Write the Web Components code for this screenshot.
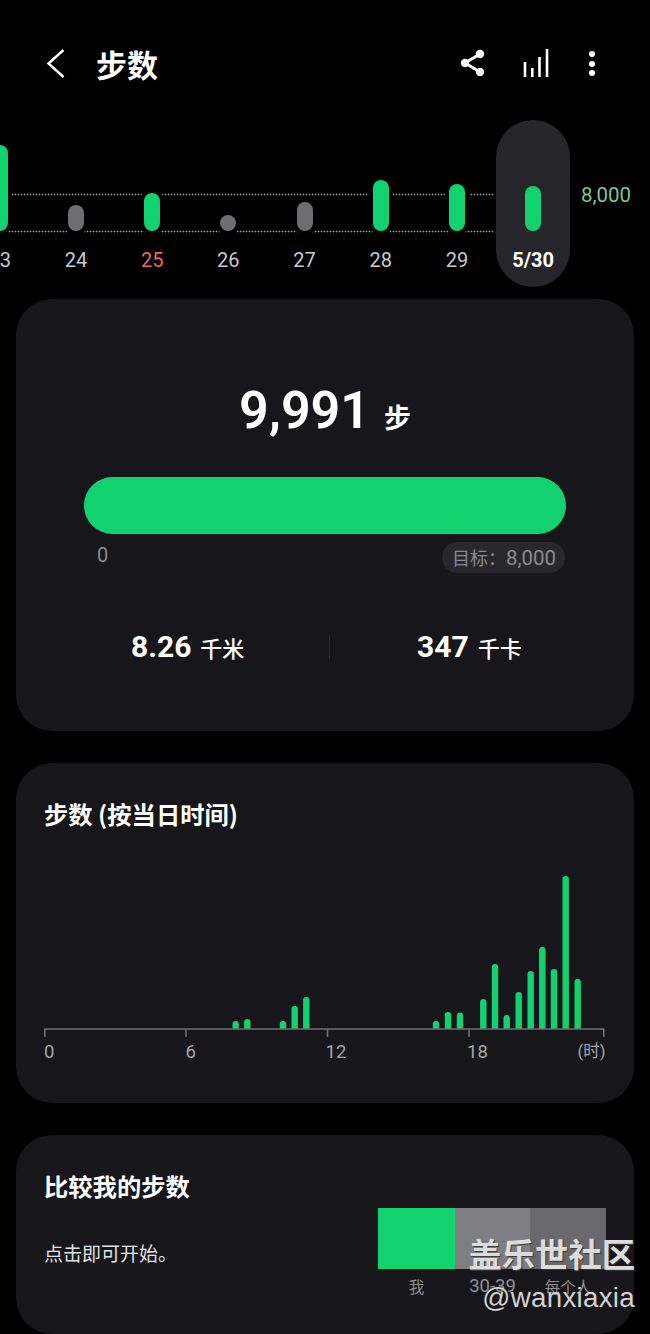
<!DOCTYPE html>
<html lang="zh"><head><meta charset="utf-8"><title>步数</title>
<style>
html,body{margin:0;background:#000;height:1334px;overflow:hidden}
body{font-family:Roboto,"Noto Sans CJK SC",sans-serif;color:#fff;position:relative}
</style></head><body>
<top-bar title-text="步数"></top-bar>
<day-strip></day-strip>
<div style="display:flex;flex-direction:column;gap:32px;padding:12px 16px 0">
<summary-card></summary-card>
<hourly-card></hourly-card>
<compare-card></compare-card>
</div>
<water-mark></water-mark>
<script>
const def=(name,html,setup)=>customElements.define(name,class extends HTMLElement{
  connectedCallback(){if(this.shadowRoot)return;const r=this.attachShadow({mode:'open'});r.innerHTML=html;if(setup)setup.call(this,r)}
});
def('top-bar',`<style>
:host{display:flex;height:120px;box-sizing:border-box;padding:49px 0 0 44px;align-items:flex-start}
h1{margin:-3px 0 0 28px;font:700 31px/36px "Noto Sans CJK SC",sans-serif;color:#fff;flex:1}
svg{display:block;fill:none;stroke:#fff}
</style>
<svg width="24" height="30" viewBox="44 49 24 30" stroke-width="2.4"><path d="M63.500 50 L48.500 63.500 L63.500 77"/></svg>
<h1 id="t"></h1>
<svg width="30" height="30" viewBox="458 49 30 30" stroke-width="3"><path d="M480 54 L465 63 L480 72"/><g fill="#fff" stroke="none"><circle cx="480" cy="54" r="4.200"/><circle cx="465" cy="63" r="4.200"/><circle cx="480" cy="72" r="4.200"/></g></svg>
<svg style="margin-left:32px" width="32" height="30" viewBox="520 49 32 30" stroke-width="2.600"><path d="M525 62V77M532.300 68V77M539.500 57V77M547 49V77"/></svg>
<svg style="margin:0 48px 0 30px" width="20" height="30" viewBox="582 49 20 30"><g fill="#fff" stroke="none"><circle cx="592" cy="54" r="3"/><circle cx="592" cy="64" r="3"/><circle cx="592" cy="73" r="3"/></g></svg>`,
function(r){r.getElementById('t').textContent=this.getAttribute('title-text')});

def('day-column',`<style>
:host{display:block;width:76.2px;flex:none;height:167px}
.c{height:100%;display:flex;flex-direction:column;align-items:center;position:relative}
.plot{height:111px;display:flex;align-items:flex-end;flex:none}
.b{width:16px;border-radius:8px;background:#12d16f;box-shadow:0 0 0 4px #000;position:relative}
.l{font:400 20px/24px Roboto,sans-serif;color:#c9c9cb;margin-top:16.500px}
:host([gray]) .b{background:#6e6e72}
:host([red]) .l{color:#e8686a}
:host([sel]) .c{width:74px;margin:0 auto;background:#26262a;border-radius:37px}
:host([sel]) .b{box-shadow:none}
:host([sel]) .l{color:#fff;font-weight:700}
</style><div class="c"><div class="plot"><div class="b" id="b"></div></div><div class="l" id="l"></div></div>`,
function(r){r.getElementById('b').style.height=this.getAttribute('h')+'px';r.getElementById('l').textContent=this.getAttribute('label')});

def('day-strip',`<style>
:host{display:block;height:167px;position:relative;overflow:hidden}
.row{display:flex;margin-left:-38.300px;position:relative}
.dot{position:absolute;left:8px;width:486px;height:3px;background:radial-gradient(circle at 1.500px 1.500px,#a2a2a4 .75px,transparent 1.100px) 0 0/3px 3px repeat-x}
.goal{position:absolute;left:581px;top:63px;font:400 20.500px/24px Roboto,sans-serif;color:#7fc497}
</style>
<div class="dot" style="top:73px"></div><div class="dot" style="top:110px"></div>
<div class="row">
<day-column h="86" label="23"></day-column>
<day-column h="26" gray label="24"></day-column>
<day-column h="38" red label="25"></day-column>
<day-column h="16" gray label="26"></day-column>
<day-column h="29" gray label="27"></day-column>
<day-column h="51" label="28"></day-column>
<day-column h="47" label="29"></day-column>
<day-column h="45" sel label="5/30"></day-column>
</div><div class="goal">8,000</div>`);

def('summary-card',`<style>
:host{display:block;height:432px;background:#17171b;border-radius:36px;box-sizing:border-box;padding:80px 68px 0;font-family:Roboto,"Noto Sans CJK SC",sans-serif}
.big{display:flex;justify-content:center;align-items:baseline;height:64px}
.n{font:600 52px/64px Roboto,sans-serif;color:#fff}
.u{font:700 27px/30px "Noto Sans CJK SC",sans-serif;margin-left:14px;color:#fff}
.bar{height:57px;border-radius:28.500px;background:#12d16f;margin-top:34px}
.sc{display:flex;justify-content:space-between;align-items:flex-start;margin-top:8px}
.z{font:400 20px/26px Roboto,sans-serif;color:#8a8a8e;margin-left:13px}
.chip{height:31px;border-radius:15.500px;background:#28282c;color:#8a8a8e;font:400 18px/31px "Noto Sans CJK SC",sans-serif;padding:0 0 0 10px;width:123px;box-sizing:border-box;white-space:nowrap;margin-right:1px;display:flex;align-items:baseline}
.chip b{font:400 20.500px/30px Roboto,sans-serif}
.stats{display:grid;grid-template-columns:313px 1px 1fr;align-items:center;margin:56px -68px 0;height:36px}
.s{display:flex;align-items:baseline;color:#fff}
.s b{font:700 30px/36px Roboto,sans-serif}
.s span{font:500 22px/30px "Noto Sans CJK SC",sans-serif;margin-left:9px}
.a{padding-left:115px}.b2{padding-left:87px}
.div{width:1px;height:24px;background:#2b2b30}
</style>
<div class="big"><span class="n">9,991</span><span class="u">步</span></div>
<div class="bar"></div>
<div class="sc"><span class="z">0</span><span class="chip">目标：<b>8,000</b></span></div>
<div class="stats"><div class="s a"><b>8.26</b><span>千米</span></div><div class="div"></div><div class="s b2"><b>347</b><span>千卡</span></div></div>`);

def('hourly-card',`<style>
:host{display:block;height:340px;background:#17171b;border-radius:36px;box-sizing:border-box;padding:33px 0 0 28px}
h2{margin:0;font:700 24.300px/36px "Noto Sans CJK SC",sans-serif;color:#fff}
svg{display:block;margin-top:43px}
.ax{display:grid;grid-template-columns:141.500px 140px 141.500px 110.500px 32px;width:566px;font:400 18.500px/22px Roboto,"Noto Sans CJK SC",sans-serif;color:#a5a5a8}
.ax .h{font-size:16.500px}
</style>
<h2>步数 (按当日时间)</h2>
<svg id="c" width="570" height="166" viewBox="44 875 570 166"></svg>
<div class="ax"><span>0</span><span>6</span><span>12</span><span>18</span><span class="h">(时)</span></div>`,
function(r){
 const d=[[235.7,1021],[247.3,1019],[283,1021],[294.7,1006],[306.3,997],[436,1021],[448,1012],[460,1012.5],[483.3,999],[495,964],[506.7,1015],[518.7,992],[530.7,971],[542.3,947],[554,969],[565.7,876],[577.7,979]];
 let s=d.map(([x,y])=>`<path fill="#12d16f" d="M${x-3.2} 1029V${y+3.2}a3.2 3.2 0 0 1 6.400 0V1029Z"/>`).join('');
 s+=`<path fill="none" stroke="#6f6f73" stroke-width="1.600" d="M44.800 1037V1029H603.800V1037M186 1029V1037M327.500 1029V1037M469 1029V1037"/>`;
 r.getElementById('c').innerHTML=s;
});

def('compare-card',`<style>
:host{display:block;height:199px;background:#17171b;border-radius:36px;box-sizing:border-box;padding:33px 28px 0 28px}
h2{margin:0;font:700 24.300px/36px "Noto Sans CJK SC",sans-serif;color:#fff}
.row{display:flex;justify-content:space-between;align-items:flex-start}
p{margin:35px 0 0;font:400 19px/28px "Noto Sans CJK SC",sans-serif;color:#e2e2e4}
.g{display:grid;grid-template-columns:77px 75px 76px;margin-top:4px}
.g i{display:block;height:61px}
.g span{font:400 15.500px/22px "Noto Sans CJK SC",sans-serif;color:#8f8f92;text-align:center;margin-top:6px}
.g span.d{font:400 18.500px/22px Roboto,sans-serif}
</style>
<h2>比较我的步数</h2>
<div class="row"><p>点击即可开始。</p>
<div class="g"><i style="background:#12d16f"></i><i style="background:#7f7f83"></i><i style="background:#69696d"></i><span>我</span><span class="d">30-39</span><span>每个人</span></div></div>`);

def('water-mark',`<style>
:host{display:block;position:absolute;right:15px;top:1232px;text-align:right;pointer-events:none}
.a{font:700 33.300px/42px "Noto Sans CJK SC",sans-serif;color:#dcdcdc;text-shadow:1px 1px 1px #3a3a3a;white-space:nowrap}
.b{font:400 27.700px/30px "Liberation Sans",sans-serif;color:#d2d2d2;margin-top:9px;letter-spacing:.3px}
</style><div class="a">盖乐世社区</div><div class="b">@wanxiaxia</div>`);
</script>
</body></html>
